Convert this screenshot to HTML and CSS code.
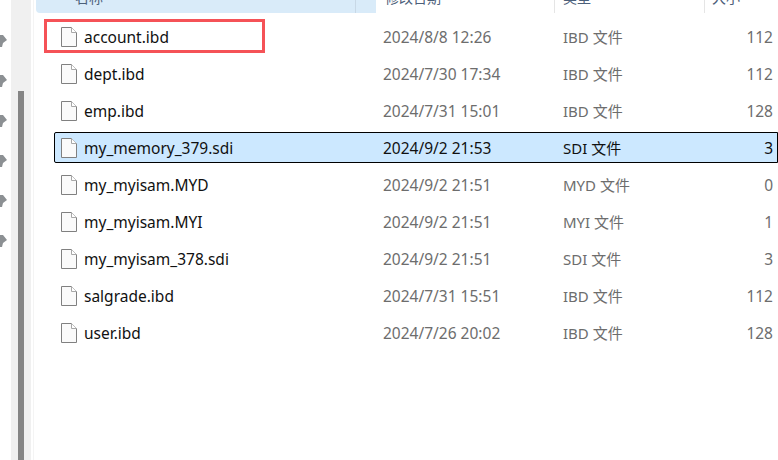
FILE: index.html
```html
<!DOCTYPE html>
<html lang="zh-CN">
<head>
  <meta charset="UTF-8" />
  <title>文件列表</title>
  <link rel="stylesheet" href="styles.css">
</head>
<body>

<svg class="icon-defs" width="0" height="0">
  <symbol id="file" viewBox="0 0 16 20">
    <path d="M.5.5h10l5 5v14H.5z" fill="#fafafa" stroke="#808080" />
    <path d="M10.5.5v5h5" fill="#fff" stroke="#a8a8a8" />
  </symbol>
  <symbol id="arrow" viewBox="0 0 7 12">
    <path d="M0 0h3l4 5-4 3-1 4H0z" fill="#8c9093" />
  </symbol>
</svg>

<div class="window">
  <div class="tree">
    <svg class="tree-arrow"><use href="#arrow" /></svg>
    <svg class="tree-arrow"><use href="#arrow" /></svg>
    <svg class="tree-arrow"><use href="#arrow" /></svg>
    <svg class="tree-arrow"><use href="#arrow" /></svg>
    <svg class="tree-arrow"><use href="#arrow" /></svg>
    <svg class="tree-arrow"><use href="#arrow" /></svg>
  </div>

  <div class="scrollbar">
    <div class="thumb"></div>
  </div>

  <div class="files">
    <div class="head">
      <div class="head-name">名称</div>
      <div class="head-date">修改日期</div>
      <div class="head-type">类型</div>
      <div class="head-size">大小</div>
    </div>

    <div class="rows">
      <div class="row">
        <svg class="file-icon"><use href="#file" /></svg>
        <span class="name">account.ibd</span>
        <span class="date">2024/8/8 12:26</span>
        <span class="type">IBD 文件</span>
        <span class="size">112</span>
        <div class="highlight"></div>
      </div>
      <div class="row">
        <svg class="file-icon"><use href="#file" /></svg>
        <span class="name">dept.ibd</span>
        <span class="date">2024/7/30 17:34</span>
        <span class="type">IBD 文件</span>
        <span class="size">112</span>
      </div>
      <div class="row">
        <svg class="file-icon"><use href="#file" /></svg>
        <span class="name">emp.ibd</span>
        <span class="date">2024/7/31 15:01</span>
        <span class="type">IBD 文件</span>
        <span class="size">128</span>
      </div>
      <div class="row selected">
        <svg class="file-icon"><use href="#file" /></svg>
        <span class="name">my_memory_379.sdi</span>
        <span class="date">2024/9/2 21:53</span>
        <span class="type">SDI 文件</span>
        <span class="size">3</span>
      </div>
      <div class="row">
        <svg class="file-icon"><use href="#file" /></svg>
        <span class="name">my_myisam.MYD</span>
        <span class="date">2024/9/2 21:51</span>
        <span class="type">MYD 文件</span>
        <span class="size">0</span>
      </div>
      <div class="row">
        <svg class="file-icon"><use href="#file" /></svg>
        <span class="name">my_myisam.MYI</span>
        <span class="date">2024/9/2 21:51</span>
        <span class="type">MYI 文件</span>
        <span class="size">1</span>
      </div>
      <div class="row">
        <svg class="file-icon"><use href="#file" /></svg>
        <span class="name">my_myisam_378.sdi</span>
        <span class="date">2024/9/2 21:51</span>
        <span class="type">SDI 文件</span>
        <span class="size">3</span>
      </div>
      <div class="row">
        <svg class="file-icon"><use href="#file" /></svg>
        <span class="name">salgrade.ibd</span>
        <span class="date">2024/7/31 15:51</span>
        <span class="type">IBD 文件</span>
        <span class="size">112</span>
      </div>
      <div class="row">
        <svg class="file-icon"><use href="#file" /></svg>
        <span class="name">user.ibd</span>
        <span class="date">2024/7/26 20:02</span>
        <span class="type">IBD 文件</span>
        <span class="size">128</span>
      </div>
    </div>
  </div>
</div>

</body>
</html>
```

FILE: styles.css
```css
body {
  margin: 0;
  background: #fff;
  font-family: "Noto Sans", "Noto Sans CJK SC", sans-serif;
  font-size: 15px;
  color: #111;
  overflow: hidden;
}
.icon-defs {
  position: absolute;
}
.window {
  display: flex;
  width: 778px;
  height: 460px;
  overflow: hidden;
}
.tree {
  flex: none;
  width: 11px;
  padding-top: 35px;
  display: flex;
  flex-direction: column;
  gap: 28px;
}
.tree-arrow {
  display: block;
  width: 7px;
  height: 12px;
}
.scrollbar {
  flex: none;
  width: 20px;
  background: #f0f0f0;
  padding: 91px 0 0 7px;
  box-sizing: border-box;
}
.thumb {
  width: 6px;
  height: 100%;
  background: #858585;
}
.files {
  flex: 1;
  min-width: 0;
  margin-left: 2px;
  padding-left: 2px;
  border-left: 1px solid #f4f4f4;
}
.head {
  display: flex;
  align-items: center;
  height: 30px;
  margin-top: -17px;
  color: #4c607a;
  font-size: 14px;
  line-height: 20px;
}
.head div {
  height: 100%;
  display: flex;
  align-items: center;
  box-sizing: border-box;
}
.head-name {
  width: 320px;
  padding-left: 39px;
  background: #d9ebf9;
  border-radius: 0 0 0 4px;
  border-right: 1px solid #c8d8e6;
}
.head-date {
  width: 199px;
  padding-left: 29px;
  background: linear-gradient(to right, #d9ebf9 20px, #fff 20px);
  border-right: 1px solid #e5e5e5;
}
.head-type {
  width: 150px;
  padding-left: 8px;
  border-right: 1px solid #e5e5e5;
}
.head-size {
  padding-left: 7px;
}
.rows {
  display: flex;
  flex-direction: column;
  gap: 6px;
  padding: 8px 0 0 18px;
}
.row {
  position: relative;
  display: grid;
  grid-template-columns: 23px 299px 180px 1fr 45px;
  align-items: center;
  height: 31px;
  width: 724px;
  padding: 0 5px 0 7px;
  box-sizing: border-box;
  color: #6d6d6d;
  font-size: 15.5px;
}
.row .name {
  color: #111;
}
.row .type {
  font-size: 15px;
}
.row .size {
  text-align: right;
}
.file-icon {
  display: block;
  width: 16px;
  height: 20px;
}
.selected {
  background: #cce8ff;
  color: #111;
  outline: 1px solid #000;
  outline-offset: -1px;
  border-radius: 2px 0 0 2px;
}
.highlight {
  position: absolute;
  left: -10px;
  top: -2px;
  width: 221px;
  height: 34px;
  border: 3px solid #f55257;
  box-sizing: border-box;
}
```
